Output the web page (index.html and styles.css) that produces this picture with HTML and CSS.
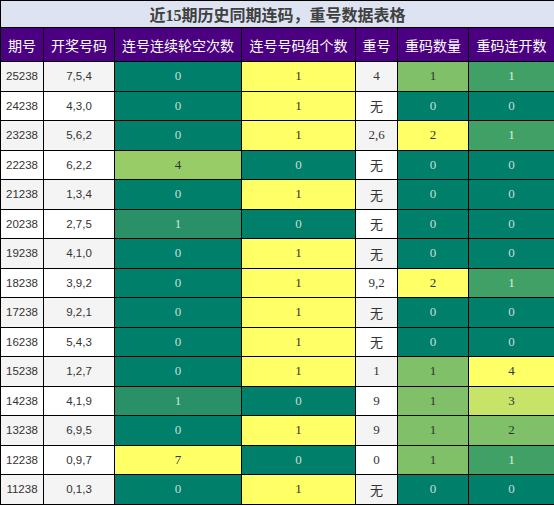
FILE: index.html
```html
<!DOCTYPE html>
<html lang="zh-CN">
<head>
    <meta charset="UTF-8">
    <meta name="viewport" content="width=device-width, initial-scale=1.0">
    <title>近15期历史同期连码，重号数据表格</title>
    <link rel="stylesheet" href="styles.css">
</head>
<body>
    <table class="data-table">
        <colgroup>
            <col class="w-issue">
            <col class="w-draw">
            <col class="w-gap">
            <col class="w-group">
            <col class="w-repeat">
            <col class="w-count">
            <col class="w-streak">
        </colgroup>
        <thead>
            <tr class="title-row">
                <th colspan="7">近15期历史同期连码，重号数据表格</th>
            </tr>
            <tr class="head-row">
                <th>期号</th>
                <th>开奖号码</th>
                <th>连号连续轮空次数</th>
                <th>连号号码组个数</th>
                <th>重号</th>
                <th>重码数量</th>
                <th>重码连开数</th>
            </tr>
        </thead>
        <tbody>
            <tr><td class="plain">25238</td><td class="plain">7,5,4</td><td class="lv0">0</td><td class="lv-top">1</td><td class="rep">4</td><td class="lv-mid">1</td><td class="lv1">1</td></tr>
            <tr><td class="plain">24238</td><td class="plain">4,3,0</td><td class="lv0">0</td><td class="lv-top">1</td><td class="rep">无</td><td class="lv0">0</td><td class="lv0">0</td></tr>
            <tr><td class="plain">23238</td><td class="plain">5,6,2</td><td class="lv0">0</td><td class="lv-top">1</td><td class="rep">2,6</td><td class="lv-top">2</td><td class="lv1">1</td></tr>
            <tr><td class="plain">22238</td><td class="plain">6,2,2</td><td class="lv-soft">4</td><td class="lv0">0</td><td class="rep">无</td><td class="lv0">0</td><td class="lv0">0</td></tr>
            <tr><td class="plain">21238</td><td class="plain">1,3,4</td><td class="lv0">0</td><td class="lv-top">1</td><td class="rep">无</td><td class="lv0">0</td><td class="lv0">0</td></tr>
            <tr><td class="plain">20238</td><td class="plain">2,7,5</td><td class="lv-low">1</td><td class="lv0">0</td><td class="rep">无</td><td class="lv0">0</td><td class="lv0">0</td></tr>
            <tr><td class="plain">19238</td><td class="plain">4,1,0</td><td class="lv0">0</td><td class="lv-top">1</td><td class="rep">无</td><td class="lv0">0</td><td class="lv0">0</td></tr>
            <tr><td class="plain">18238</td><td class="plain">3,9,2</td><td class="lv0">0</td><td class="lv-top">1</td><td class="rep">9,2</td><td class="lv-top">2</td><td class="lv1">1</td></tr>
            <tr><td class="plain">17238</td><td class="plain">9,2,1</td><td class="lv0">0</td><td class="lv-top">1</td><td class="rep">无</td><td class="lv0">0</td><td class="lv0">0</td></tr>
            <tr><td class="plain">16238</td><td class="plain">5,4,3</td><td class="lv0">0</td><td class="lv-top">1</td><td class="rep">无</td><td class="lv0">0</td><td class="lv0">0</td></tr>
            <tr><td class="plain">15238</td><td class="plain">1,2,7</td><td class="lv0">0</td><td class="lv-top">1</td><td class="rep">1</td><td class="lv-mid">1</td><td class="lv-top">4</td></tr>
            <tr><td class="plain">14238</td><td class="plain">4,1,9</td><td class="lv-low">1</td><td class="lv0">0</td><td class="rep">9</td><td class="lv-mid">1</td><td class="lv3">3</td></tr>
            <tr><td class="plain">13238</td><td class="plain">6,9,5</td><td class="lv0">0</td><td class="lv-top">1</td><td class="rep">9</td><td class="lv-mid">1</td><td class="lv-mid">2</td></tr>
            <tr><td class="plain">12238</td><td class="plain">0,9,7</td><td class="lv-top">7</td><td class="lv0">0</td><td class="rep">0</td><td class="lv-mid">1</td><td class="lv1">1</td></tr>
            <tr><td class="plain">11238</td><td class="plain">0,1,3</td><td class="lv0">0</td><td class="lv-top">1</td><td class="rep">无</td><td class="lv0">0</td><td class="lv0">0</td></tr>
        </tbody>
    </table>
</body>
</html>
```

FILE: styles.css
```css
* {
    box-sizing: border-box;
}

body {
    margin: 0;
    background-color: #ffffff;
    font-family: "Liberation Serif", "Noto Sans CJK SC", serif;
}

.data-table {
    width: 554px;
    border-collapse: collapse;
    table-layout: fixed;
    text-align: center;
}

.w-issue { width: 43px; }
.w-draw { width: 71px; }
.w-gap { width: 127px; }
.w-group { width: 114px; }
.w-repeat { width: 42px; }
.w-count { width: 71px; }
.w-streak { width: 86px; }

.data-table th,
.data-table td {
    border: 1px solid #000000;
    padding: 0;
    overflow: hidden;
    white-space: nowrap;
}

.title-row th {
    height: 27px;
    background-color: #dde3f1;
    color: #404040;
    font-size: 16px;
    font-weight: bold;
    font-family: "Liberation Serif", "Noto Sans CJK SC", serif;
}

.head-row th {
    height: 34px;
    background-color: #4b0082;
    color: #ffffff;
    font-size: 14px;
    font-weight: normal;
    font-family: "Noto Sans CJK SC", sans-serif;
}

tbody tr {
    height: 29.5px;
}

tbody td {
    font-size: 13px;
    color: #333333;
}

td.plain {
    font-family: "Liberation Sans", "Noto Sans CJK SC", sans-serif;
    font-size: 11.5px;
    background-color: #f4f4f4;
}

td.rep {
    font-family: "Liberation Serif", "Noto Sans CJK SC", serif;
    background-color: #f4f4f4;
}

tbody tr:nth-child(even) td.plain,
tbody tr:nth-child(even) td.rep {
    background-color: #ffffff;
}

/* colour scale, dark teal to yellow */
td.lv0 {
    background-color: #00806a;
    color: #c9ddd6;
}

td.lv-low {
    background-color: #2a9068;
    color: #d3e6da;
}

td.lv1 {
    background-color: #40a066;
    color: #dcecdf;
}

td.lv-soft {
    background-color: #98cc66;
}

td.lv-mid {
    background-color: #80c068;
}

td.lv3 {
    background-color: #c8e468;
}

td.lv-top {
    background-color: #ffff66;
}
```
